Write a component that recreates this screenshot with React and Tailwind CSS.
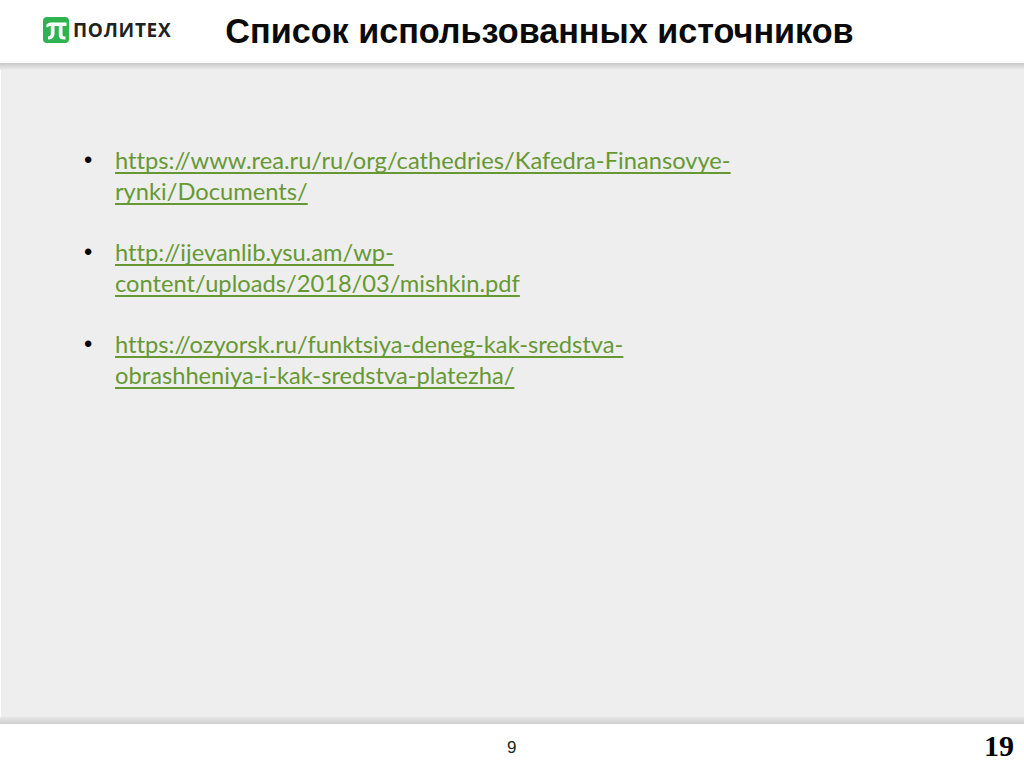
const links = [
  ['https://www.rea.ru/ru/org/cathedries/Kafedra-Finansovye-', 'rynki/Documents/'],
  ['http://ijevanlib.ysu.am/wp-', 'content/uploads/2018/03/mishkin.pdf'],
  ['https://ozyorsk.ru/funktsiya-deneg-kak-sredstva-', 'obrashheniya-i-kak-sredstva-platezha/'],
];

function Logo() {
  return (
    <div className="flex items-center gap-[4px] mb-[3px]">
      <svg width="26" height="26" viewBox="0 0 26 26">
        <rect width="26" height="26" rx="4" fill="#2fb350" />
        <path d="M3 9.5C3.5 6.5 5.5 5.5 8 5.5H23.5V9H19.5V17.5C19.5 19 20 19.5 22.5 19.5V22.5C18 22.8 15.8 21.5 15.8 18V9H11.5V16C11.5 20 9.5 22.5 5 22.5V19.5C7 19.5 7.8 18.5 7.8 16V9C5.8 9 5.2 9.5 5 10.5Z" fill="#fff" />
      </svg>
      <span className="text-[19px] leading-none font-bold tracking-[0.7px] text-[#222222] font-['Open_Sans',sans-serif]">ПОЛИТЕХ</span>
    </div>
  );
}

export default function App() {
  return (
    <div className="w-[1024px] h-[767px] flex flex-col bg-white overflow-hidden font-['Liberation_Sans',sans-serif]">
      <header className="h-[63px] flex items-center pl-[43px] bg-white">
        <Logo />
        <h1 className="ml-[54px] text-[34.2px] font-bold text-[#0a0a0a] whitespace-nowrap">Список использованных источников</h1>
      </header>
      <div className="h-[7px] bg-gradient-to-b from-[#c8c8c8] to-[#eeeeee]" />

      <main className="flex-1 bg-[#eeeeee] border-l border-white pl-[83px] pt-[75px]">
        <ul className="flex flex-col gap-[31px]">
          {links.map((l) => (
            <li key={l[0]} className="flex font-['Lato',sans-serif] text-[23.7px] leading-[30.5px] text-[#669933]">
              <span className="w-[31px] text-black font-['Liberation_Sans',sans-serif]">•</span>
              <div className="underline decoration-[1.5px] underline-offset-[3px] whitespace-nowrap [text-decoration-skip-ink:none] [font-variant-ligatures:none]">
                <div>{l[0]}</div>
                <div>{l[1]}</div>
              </div>
            </li>
          ))}
        </ul>
      </main>

      <div className="h-[7px] bg-gradient-to-b from-[#e6e6e6] to-[#cfcfcf]" />
      <footer className="h-[43px] flex items-center bg-white">
        <span className="ml-[507px] mt-[5px] text-[17px] text-[#222222]">9</span>
        <span className="ml-auto mr-[10px] text-[30px] font-bold text-black font-['Liberation_Serif',serif]">19</span>
      </footer>
    </div>
  );
}
